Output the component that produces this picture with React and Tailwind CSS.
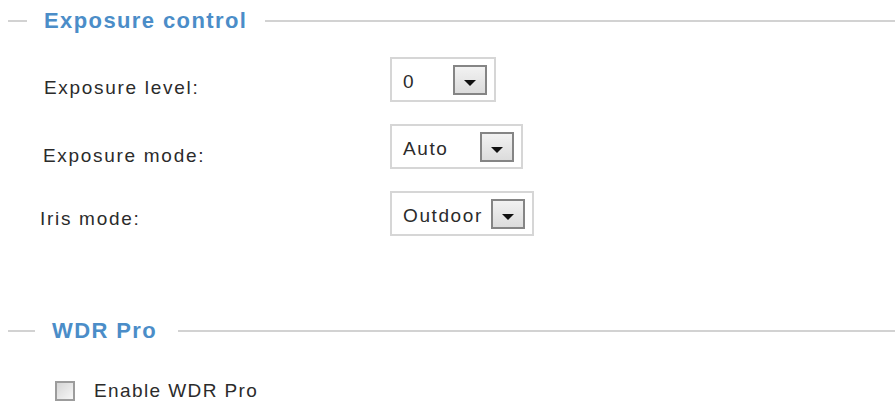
import React, { useState } from 'react';

const Legend = ({ title, lead, textWidth, className = '' }) => (
  <div className={`flex items-center h-[26px] ${className}`}>
    <div className={`h-[2px] bg-[#d2d2d2] ml-[8px] ${lead}`} />
    <span
      className={`mx-[17px] text-[22px] font-bold leading-[26px] tracking-[1.4px] text-[#4b8dc8] whitespace-nowrap ${textWidth}`}
    >
      {title}
    </span>
    <div className="h-[2px] bg-[#d2d2d2] flex-1" />
  </div>
);

const DropButton = () => (
  <div className="w-[34px] h-[30px] border-2 border-[#858585] bg-gradient-to-b from-[#f2f2f2] to-[#dcdcdc] flex justify-center items-end pb-[7px]">
    <div className="w-0 h-0 border-l-[6px] border-r-[6px] border-t-[6px] border-l-transparent border-r-transparent border-t-[#111]" />
  </div>
);

const Select = ({ value, width }) => (
  <div
    className={`h-[45px] ${width} border-2 border-[#d6d6d6] bg-white flex items-center justify-between pl-[11px] pr-[7px]`}
  >
    <span className="text-[19px] tracking-[1.6px] text-[#2b2b2b] pt-[6px]">{value}</span>
    <DropButton />
  </div>
);

const Row = ({ label, value, width, labelPad, labelTop }) => (
  <div className="flex items-start">
    <div className={`w-[390px] ${labelPad}`}>
      <span className={`block text-[19px] leading-[20px] tracking-[1.7px] text-[#2b2b2b] ${labelTop}`}>
        {label}
      </span>
    </div>
    <Select value={value} width={width} />
  </div>
);

export default function App() {
  const [wdr, setWdr] = useState(false);

  return (
    <div
      className="w-[895px] h-[412px] bg-white overflow-hidden pt-[8px]"
      style={{ fontFamily: '"Liberation Sans", Arial, sans-serif' }}
    >
      <Legend title="Exposure control" lead="w-[19px]" textWidth="w-[204px]" />

      <div className="flex flex-col gap-[22px] mt-[23px]">
        <Row label="Exposure level:" value="0" width="w-[106px]" labelPad="pl-[44px]" labelTop="mt-[21px]" />
        <Row label="Exposure mode:" value="Auto" width="w-[133px]" labelPad="pl-[43px]" labelTop="mt-[22px]" />
        <Row label="Iris mode:" value="Outdoor" width="w-[144px]" labelPad="pl-[40px]" labelTop="mt-[18px]" />
      </div>

      <Legend title="WDR Pro" lead="w-[27px]" textWidth="w-[109px]" className="mt-[82px]" />

      <label className="flex items-center mt-[37px] pl-[55px] cursor-pointer">
        <input type="checkbox" className="hidden" checked={wdr} onChange={e => setWdr(e.target.checked)} />
        <span className="w-[20px] h-[20px] border-2 border-[#9c9c9c] bg-gradient-to-br from-[#d6d6d6] to-[#f6f6f6] flex items-center justify-center text-[14px] leading-none text-[#222]">
          {wdr ? '✓' : ''}
        </span>
        <span className="ml-[19px] text-[19px] leading-[20px] tracking-[1.4px] text-[#2b2b2b]">Enable WDR Pro</span>
      </label>
    </div>
  );
}
